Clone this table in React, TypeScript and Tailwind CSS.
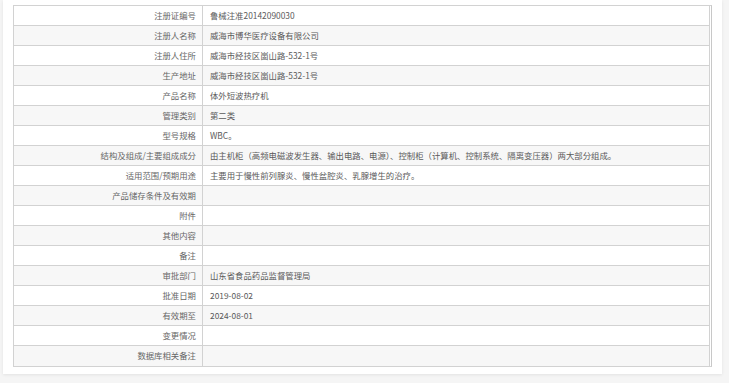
import React from 'react';

const rows: [string, string][] = [
  ['注册证编号', '鲁械注准20142090030'],
  ['注册人名称', '威海市博华医疗设备有限公司'],
  ['注册人住所', '威海市经技区崮山路-532-1号'],
  ['生产地址', '威海市经技区崮山路-532-1号'],
  ['产品名称', '体外短波热疗机'],
  ['管理类别', '第二类'],
  ['型号规格', 'WBC。'],
  ['结构及组成/主要组成成分', '由主机柜（高频电磁波发生器、输出电路、电源）、控制柜（计算机、控制系统、隔离变压器）两大部分组成。'],
  ['适用范围/预期用途', '主要用于慢性前列腺炎、慢性盆腔炎、乳腺增生的治疗。'],
  ['产品储存条件及有效期', ''],
  ['附件', ''],
  ['其他内容', ''],
  ['备注', ''],
  ['审批部门', '山东省食品药品监督管理局'],
  ['批准日期', '2019-08-02'],
  ['有效期至', '2024-08-01'],
  ['变更情况', ''],
  ['数据库相关备注', ''],
];

export default function App() {
  return (
    <div
      className="w-[729px] h-[383px] bg-[#f5f5f5] overflow-hidden"
      style={{ fontFamily: '"Noto Sans CJK SC", "Liberation Sans", sans-serif' }}
    >
      <div className="ml-[3px] w-[719px] bg-white shadow-[0_1px_3px_rgba(0,0,0,0.08)] pl-[10px] pr-[10px] pt-[5px] pb-[7px]">
        <div className="border border-[#d2d2d2] border-r-[#c8c8c8] pr-[1px]">
          {rows.map(([label, value], i) => (
            <div
              key={label}
              className={`grid grid-cols-[189px_1fr] h-[20px] text-[8.4px] leading-[19px] ${
                i < rows.length - 1 ? 'border-b border-[#d2d2d2]' : ''
              } ${i % 2 === 1 ? 'bg-[#f7f7f7]' : 'bg-white'}`}
            >
              <div className="text-right pr-[6px] text-[#666] border-r border-[#d2d2d2]">
                {label}
              </div>
              <div className="pl-[7px] text-[#5a5a5a] border-r border-[#d2d2d2] whitespace-nowrap">
                {value}
              </div>
            </div>
          ))}
        </div>
      </div>
    </div>
  );
}
